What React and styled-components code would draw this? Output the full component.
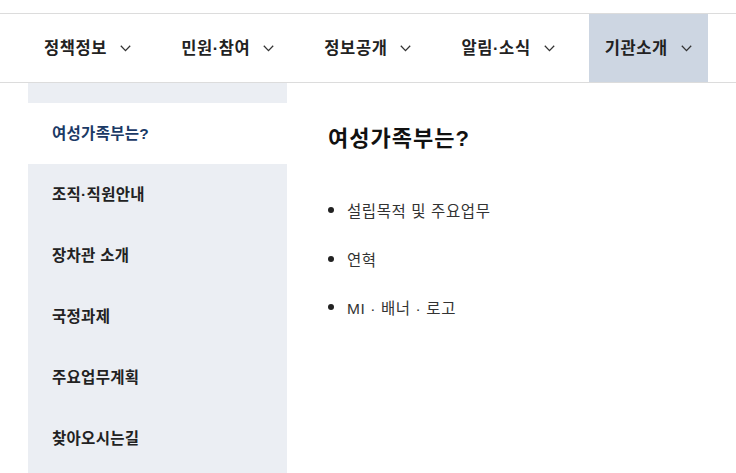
import React from 'react'
import styled, { createGlobalStyle } from 'styled-components'

const GlobalStyle = createGlobalStyle`
  html, body {
    margin: 0;
    padding: 0;
    background: #fff;
    font-family: "Liberation Sans", "Noto Sans CJK KR", sans-serif;
  }
  ul { margin: 0; padding: 0; }
`

const Page = styled.div`
  width: 736px;
  height: 473px;
  overflow: hidden;
  padding-top: 13px;
  box-sizing: border-box;
`

const NavBar = styled.nav`
  display: flex;
  gap: 18px;
  height: 68px;
  padding-left: 28px;
  border-top: 1px solid #dcdcdc;
  border-bottom: 1px solid #dcdcdc;
`

const NavItem = styled.div`
  display: flex;
  align-items: center;
  gap: 13px;
  padding: 0 16px 3px;
  font-size: 16.5px;
  letter-spacing: 0.6px;
  font-weight: 700;
  color: #222;
  background: ${p => (p.active ? '#cdd6e2' : 'transparent')};

  svg { margin-top: 3px; }
`

const Chevron = () => (
  <svg width="11" height="7" viewBox="0 0 11 7">
    <path d="M0.8 0.8 L5.5 5.6 L10.2 0.8" fill="none" stroke="#333" strokeWidth="1.3" />
  </svg>
)

const Body = styled.div`
  display: flex;
  padding-left: 28px;
  gap: 41px;
`

const Side = styled.ul`
  list-style: none;
  width: 259px;
  padding-top: 20px;
  background: #ebeef3;
  min-height: 400px;
`

const SideItem = styled.li`
  display: flex;
  align-items: center;
  height: 61px;
  padding: 0 0 4px 24px;
  box-sizing: border-box;
  font-size: 15.5px;
  letter-spacing: 0.3px;
  font-weight: 700;
  color: ${p => (p.active ? '#1b3a66' : '#222')};
  background: ${p => (p.active ? '#fff' : 'transparent')};
`

const Content = styled.section`
  padding-top: 40px;
`

const Title = styled.h2`
  margin: 0 0 31px;
  font-size: 22px;
  letter-spacing: 1px;
  font-weight: 700;
  color: #111;
  line-height: 32px;
`

const Links = styled.ul`
  list-style: none;
`

const LinkItem = styled.li`
  display: flex;
  align-items: center;
  height: 48.5px;
  font-size: 15.5px;
  letter-spacing: 0.6px;
  color: #333;

  &::before {
    content: '';
    width: 6px;
    height: 6px;
    border-radius: 50%;
    background: #222;
    margin: 0 13px 0 0;
  }
`

const menus = ['정책정보', '민원·참여', '정보공개', '알림·소식', '기관소개']
const sideMenus = ['여성가족부는?', '조직·직원안내', '장차관 소개', '국정과제', '주요업무계획', '찾아오시는길']
const links = ['설립목적 및 주요업무', '연혁', 'MI · 배너 · 로고']

export default function App() {
  return (
    <Page>
      <GlobalStyle />
      <NavBar>
        {menus.map(m => (
          <NavItem key={m} active={m === '기관소개'}>
            {m}
            <Chevron />
          </NavItem>
        ))}
      </NavBar>
      <Body>
        <Side>
          {sideMenus.map((s, i) => (
            <SideItem key={s} active={i === 0}>{s}</SideItem>
          ))}
        </Side>
        <Content>
          <Title>여성가족부는?</Title>
          <Links>
            {links.map(l => (
              <LinkItem key={l}>{l}</LinkItem>
            ))}
          </Links>
        </Content>
      </Body>
    </Page>
  )
}
